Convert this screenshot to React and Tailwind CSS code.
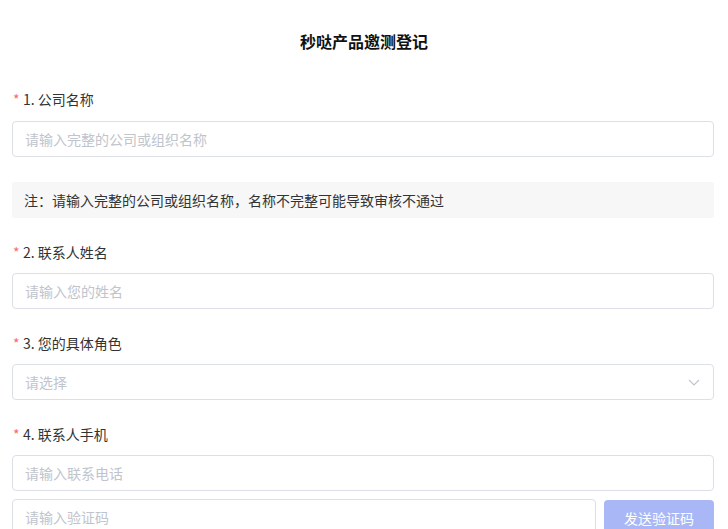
const font = { fontFamily: '"Noto Sans CJK SC", "Noto Sans", sans-serif' }

function Label({ children }) {
  return (
    <div className="flex items-center h-[22px] text-[14px] text-[#333]">
      <span className="text-[#f56c6c] mr-[4px] w-[6px] ml-[1px]">*</span>
      <span>{children}</span>
    </div>
  )
}

function Input({ placeholder, className = '' }) {
  return (
    <div className={`h-[36px] border border-[#dcdfe6] rounded-[4px] flex items-center px-3 text-[14px] text-[#c0c4cc] bg-white ${className}`}>
      {placeholder}
    </div>
  )
}

export default function App() {
  return (
    <div className="w-[728px] h-[529px] overflow-hidden bg-white pl-3 pr-[14px]" style={font}>
      {/* Title */}
      <div className="h-[82px] pt-[30px] text-center text-[16px] font-bold text-[#111] leading-[22px] pl-[2px]">
        秒哒产品邀测登记
      </div>

      {/* 1 */}
      <div className="pt-[6px]">
        <Label>1. 公司名称</Label>
        <div className="mt-[11px]">
          <Input placeholder="请输入完整的公司或组织名称" />
        </div>
        <div className="mt-[25px] h-[36px] bg-[#f7f7f7] rounded-[2px] flex items-center px-3 text-[14px] text-[#333]">
          注：请输入完整的公司或组织名称，名称不完整可能导致审核不通过
        </div>
      </div>

      {/* 2 */}
      <div className="mt-[23px]">
        <Label>2. 联系人姓名</Label>
        <div className="mt-[10px]">
          <Input placeholder="请输入您的姓名" />
        </div>
      </div>

      {/* 3 */}
      <div className="mt-[23px]">
        <Label>3. 您的具体角色</Label>
        <div className="mt-[10px] h-[36px] border border-[#dcdfe6] rounded-[4px] flex items-center justify-between px-3 text-[14px] text-[#c0c4cc]">
          <span>请选择</span>
          <svg width="14" height="14" viewBox="0 0 14 14" fill="none" stroke="#c0c4cc" strokeWidth="1.2">
            <path d="M2 5l5 5 5-5" />
          </svg>
        </div>
      </div>

      {/* 4 */}
      <div className="mt-[23px]">
        <Label>4. 联系人手机</Label>
        <div className="mt-[10px]">
          <Input placeholder="请输入联系电话" />
        </div>
        <div className="mt-[8px] flex gap-[8px]">
          <Input placeholder="请输入验证码" className="flex-1" />
          <button className="w-[110px] h-[36px] rounded-[4px] bg-[#a9b7f6] text-white text-[14px] mt-[1px]">
            发送验证码
          </button>
        </div>
      </div>
    </div>
  )
}
